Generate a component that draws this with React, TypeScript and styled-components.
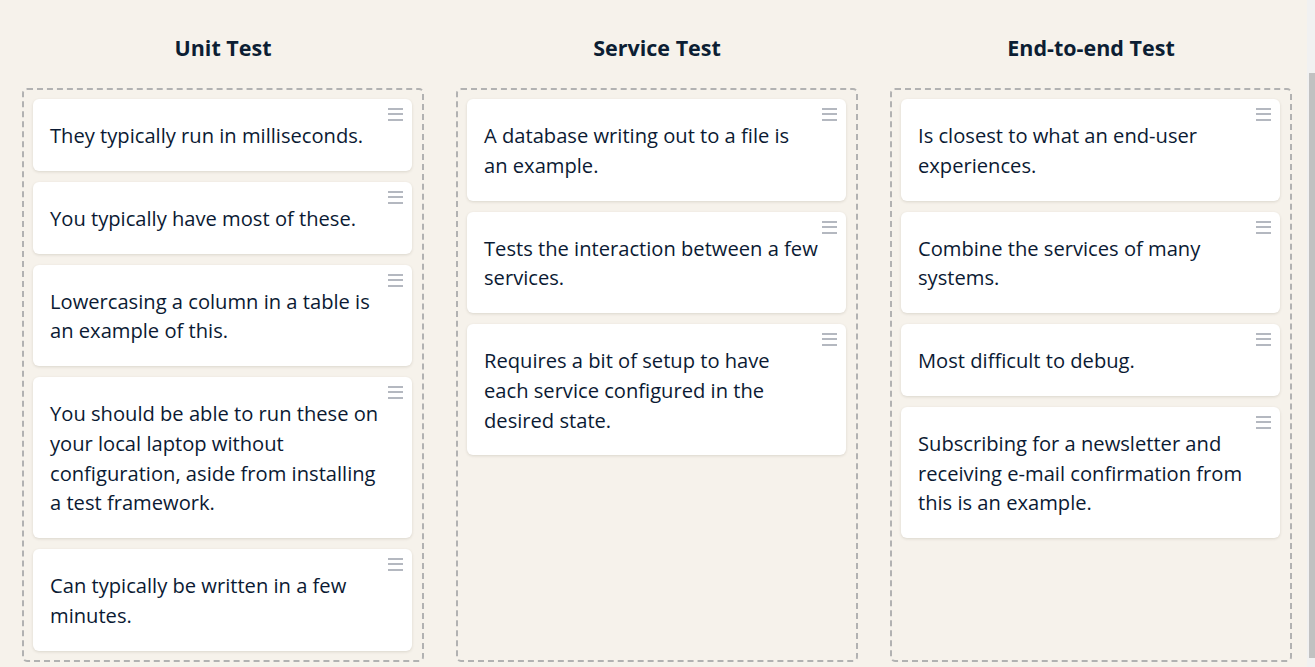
import React from "react";
import styled, { createGlobalStyle } from "styled-components";

const GlobalStyle = createGlobalStyle`
	html,
	body {
		margin: 0;
		padding: 0;
		height: 100%;
		overflow: hidden;
		background: #f6f2eb;
	}
	* {
		box-sizing: border-box;
	}
`;

const Page = styled.div`
	display: flex;
	height: 667px;
	font-family: "Open Sans", "Noto Sans", sans-serif;
	color: #0b1a33;
`;

const Board = styled.div`
	flex: 1;
	display: grid;
	grid-template-columns: repeat(3, 402px);
	column-gap: 32px;
	padding-left: 22px;
`;

const Column = styled.section`
	display: flex;
	flex-direction: column;
`;

const Heading = styled.h2`
	margin: 0;
	padding: 34px 0 26px;
	line-height: 28px;
	font-size: 21.5px;
	font-weight: 700;
	text-align: center;
	color: #0c1e33;
`;

const DropZone = styled.div`
	height: 574px;
	border: 2px dashed #b2b2b2;
	border-radius: 5px;
	padding: 9px 10px 9px 9px;
	display: flex;
	flex-direction: column;
	gap: 11px;
`;

const Card = styled.div`
	position: relative;
	background: #ffffff;
	border-radius: 6px;
	box-shadow: 0 1px 3px rgba(60, 50, 30, 0.14);
	padding: 21px 27.5px 21px 17px;
`;

const CardText = styled.p`
	margin: 0;
	font-size: 20.15px;
	line-height: 29.75px;
	padding-top: 1px;
	margin-bottom: -1px;
`;

const Handle = styled.svg`
	position: absolute;
	top: 9px;
	right: 9px;
	width: 15px;
	height: 13px;
`;

const ScrollTrack = styled.div`
	width: 8px;
	height: 100%;
	background: #f1f1f1;
	padding: 73px 0 9px 2px;
`;

const ScrollThumb = styled.div`
	height: 100%;
	background: #c1c1c1;
`;

const DragHandle = () => (
	<Handle viewBox="0 0 15 13" fill="#b4b8c0">
		<rect x="0" y="0" width="15" height="2" />
		<rect x="0" y="5" width="15" height="2" />
		<rect x="0" y="11" width="15" height="2" />
	</Handle>
);

const columns = [
	{
		title: "Unit Test",
		cards: [
			"They typically run in milliseconds.",
			"You typically have most of these.",
			"Lowercasing a column in a table is an example of this.",
			"You should be able to run these on your local laptop without configuration, aside from installing a test framework.",
			"Can typically be written in a few minutes.",
		],
	},
	{
		title: "Service Test",
		cards: [
			"A database writing out to a file is an\u00a0example.",
			"Tests the interaction between a few services.",
			"Requires a bit of setup to have each service configured in the desired state.",
		],
	},
	{
		title: "End-to-end Test",
		cards: [
			"Is closest to what an end-user experiences.",
			"Combine the services of many systems.",
			"Most difficult to debug.",
			"Subscribing for a newsletter and receiving e-mail confirmation from this is an example.",
		],
	},
];

const App = () => {
	return (
		<Page>
			<GlobalStyle />
			<Board>
				{columns.map((column) => (
					<Column key={column.title}>
						<Heading>{column.title}</Heading>
						<DropZone>
							{column.cards.map((text) => (
								<Card key={text}>
									<DragHandle />
									<CardText>{text}</CardText>
								</Card>
							))}
						</DropZone>
					</Column>
				))}
			</Board>
			<ScrollTrack>
				<ScrollThumb />
			</ScrollTrack>
		</Page>
	);
};

export default App;
